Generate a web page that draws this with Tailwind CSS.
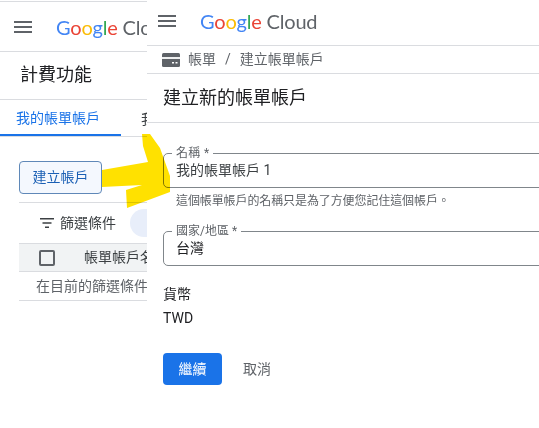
<!DOCTYPE html>
<html lang="zh-Hant">
<head>
    <meta charset="UTF-8">
    <title>建立新的帳單帳戶</title>
    <script src="https://cdn.jsdelivr.net/npm/@tailwindcss/browser@4"></script>
</head>
<body class="relative w-[539px] h-[428px] overflow-hidden bg-white text-[#3c4043] font-['Roboto','Noto_Sans_CJK_TC',sans-serif]">
    <div class="flex h-full">
        <!-- billing list behind -->
        <aside class="w-[147px] shrink-0 overflow-hidden whitespace-nowrap">
            <div class="h-[51px] mt-px border-y border-[#dadce0] flex items-center pl-[14px] gap-[24px]">
                <svg class="w-[18px] h-[12px] shrink-0" viewBox="0 0 18 12" fill="#5f6368"><path d="M0 0h18v2H0zM0 5h18v2H0zM0 10h18v2H0z"/></svg>
                <div class="text-[20px] leading-none tracking-[-0.2px] font-['Lato',sans-serif]"><span class="text-[#4285f4]">G</span><span class="text-[#ea4335]">o</span><span class="text-[#fbbc05]">o</span><span class="text-[#4285f4]">g</span><span class="text-[#34a853]">l</span><span class="text-[#ea4335]">e</span> <span class="text-[#5f6368]">Cloud</span></div>
            </div>
            <div class="h-[48px] border-b border-[#dadce0] flex items-center pl-[20px] pb-[2px] text-[18px] text-[#202124]">計費功能</div>
            <div class="relative h-[37px] border-b border-[#dadce0] flex text-[14px] items-center">
                <div class="w-[121px] shrink-0 h-full flex items-center pl-[16px] text-[#1a73e8] border-b-[2px] border-[#1a73e8] pt-[2px]">我的帳單帳戶</div>
                <div class="pl-[20px] pt-[2px]">我</div>
            </div>
            <div class="pl-[19px] pt-[24px]">
                <button class="w-[83px] h-[33px] rounded border border-[#5f88b8] bg-[#f4f8fe] text-[14px] text-[#1a5fb4]">建立帳戶</button>
                <div class="mt-[8px] border-t border-[#dadce0] h-[41px] flex items-center pl-[21px] gap-[6px] text-[14px]">
                    <svg class="w-[14px] h-[10px] shrink-0" viewBox="0 0 14 10" fill="#3c4043"><path d="M0 0h14v1.600H0zM2.500 4.200h9v1.600h-9zM5 8.400h4V10H5z"/></svg>
                    <span>篩選條件</span>
                    <span class="ml-[8px] w-[36px] h-[28px] rounded-full bg-[#e8eefa] shrink-0"></span>
                </div>
                <div class="h-[29px] bg-[#f1f3f4] border-y border-[#dadce0] flex items-center pl-[20px] gap-[29px] text-[14px]">
                    <span class="w-[16px] h-[16px] rounded-[2px] border-[2px] border-[#5f6368] shrink-0"></span>
                    <span>帳單帳戶名稱</span>
                </div>
                <div class="h-[29px] border-b border-[#dadce0] flex items-center pl-[17px] text-[14px] text-[#5f6368]">在目前的篩選條件下</div>
            </div>
        </aside>

        <!-- create account form -->
        <main class="flex-1 min-w-0 overflow-hidden whitespace-nowrap">
            <div class="h-[46px] border-b border-[#dadce0] flex items-center pl-[11px] gap-[24px] pb-[3px]">
                <svg class="w-[18px] h-[12px] shrink-0" viewBox="0 0 18 12" fill="#5f6368"><path d="M0 0h18v2H0zM0 5h18v2H0zM0 10h18v2H0z"/></svg>
                <div class="text-[20px] leading-none tracking-[-0.2px] font-['Lato',sans-serif]"><span class="text-[#4285f4]">G</span><span class="text-[#ea4335]">o</span><span class="text-[#fbbc05]">o</span><span class="text-[#4285f4]">g</span><span class="text-[#34a853]">l</span><span class="text-[#ea4335]">e</span> <span class="text-[#5f6368]">Cloud</span></div>
            </div>
            <div class="h-[28px] border-b border-[#dadce0] flex items-center pl-[15px] text-[14px] text-[#5f6368]">
                <svg class="w-[18px] h-[14px] mr-[8px] shrink-0" viewBox="0 0 18 14"><rect width="18" height="14" rx="1.500" fill="#5f6368"/><path d="M0 4h18v2H0z" fill="#fff" opacity=".9"/><path d="M10 9h2v1.500h-2zM13.500 9h2v1.500h-2z" fill="#fff"/></svg>
                <span>帳單</span><span class="mx-[9px]">/</span><span>建立帳單帳戶</span>
            </div>
            <h1 class="h-[49px] border-b border-[#dadce0] flex items-center pl-[16px] pb-[2px] text-[18px] font-normal text-[#202124]">建立新的帳單帳戶</h1>

            <div class="pl-[16px] pt-[23px]">
                <fieldset class="w-[420px] h-[42px] border border-[#80868b] rounded-[5px] pl-[8px]">
                    <legend class="px-[4px] text-[12px] leading-[14px] text-[#5f6368] tracking-[0.3px]">名稱 *</legend>
                    <div class="pl-[4px] text-[14px] leading-[20px]">我的帳單帳戶 1</div>
                </fieldset>
                <p class="mt-[5px] pl-[13px] text-[12px] leading-[16px] tracking-[-0.1px] text-[#5f6368]">這個帳單帳戶的名稱只是為了方便您記住這個帳戶。</p>
                <fieldset class="mt-[15px] w-[420px] h-[42px] border border-[#80868b] rounded-[5px] pl-[8px]">
                    <legend class="px-[4px] text-[12px] leading-[14px] text-[#5f6368]">國家/地區 *</legend>
                    <div class="pl-[4px] text-[14px] leading-[20px] text-[#202124]">台灣</div>
                </fieldset>
                <div class="mt-[18px] text-[14px] leading-[20px] text-[#202124]">貨幣</div>
                <div class="mt-[4px] text-[14px] leading-[20px] text-[#202124]">TWD</div>
                <div class="mt-[25px] flex items-center">
                    <button class="w-[59px] h-[32px] rounded bg-[#1a73e8] text-[14px] text-white">繼續</button>
                    <span class="ml-[21px] text-[14px] text-[#5f6368]">取消</span>
                </div>
            </div>
        </main>
    </div>

    <!-- hand drawn arrow over the two windows -->
    <svg class="absolute left-0 top-0 w-[539px] h-[428px] pointer-events-none mix-blend-multiply" viewBox="0 0 539 428">
        <path d="M102 170L148 162L143 146L142 134L150 134L160 148L170 176L170 192L127 208L126 190L142 185L102 187Z" fill="#ffe100"/>
    </svg>
</body>
</html>
